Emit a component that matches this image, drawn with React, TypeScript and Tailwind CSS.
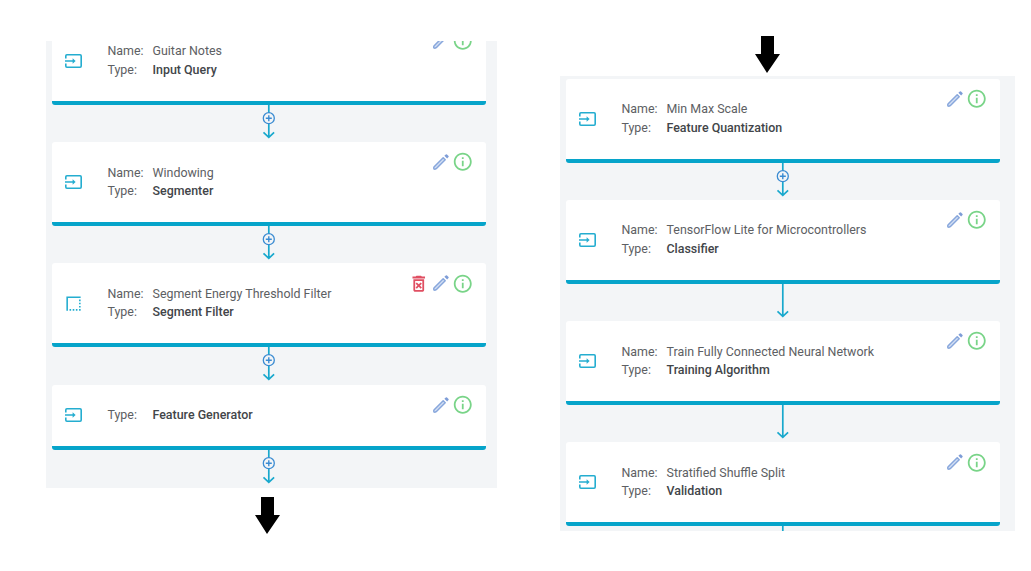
import { MdBorderStyle, MdInfoOutline, MdOutlineDeleteForever } from "react-icons/md";

type Step = {
  name?: string;
  type: string;
  icon?: "input" | "filter";
  deletable?: boolean;
  link: "add" | "plain";
};

const leftSteps: Step[] = [
  { name: "Guitar Notes", type: "Input Query", link: "add" },
  { name: "Windowing", type: "Segmenter", link: "add" },
  { name: "Segment Energy Threshold Filter", type: "Segment Filter", icon: "filter", deletable: true, link: "add" },
  { type: "Feature Generator", link: "add" },
];

const rightSteps: Step[] = [
  { name: "Min Max Scale", type: "Feature Quantization", link: "add" },
  { name: "TensorFlow Lite for Microcontrollers", type: "Classifier", link: "plain" },
  { name: "Train Fully Connected Neural Network", type: "Training Algorithm", link: "plain" },
  { name: "Stratified Shuffle Split", type: "Validation", link: "plain" },
];

function InputIcon() {
  return (
    <svg className="h-[14px] w-[17px] shrink-0" viewBox="0 0 17 14" fill="none">
      <path
        d="M0.8 4.6V1.9Q0.8 0.8 1.9 0.8H15.1Q16.2 0.8 16.2 1.9V12.1Q16.2 13.2 15.1 13.2H1.9Q0.8 13.2 0.8 12.1V9.4"
        stroke="currentColor"
        strokeWidth="1.6"
      />
      <path d="M0 7H9" stroke="currentColor" strokeWidth="1.5" />
      <path d="M7.6 4.3L10.6 7L7.6 9.7Z" fill="currentColor" />
    </svg>
  );
}

function Pencil() {
  return (
    <svg className="size-[18px] shrink-0" viewBox="0 0 18 18" fill="none">
      <path
        d="M1.9 15.9Q1.4 15 2.2 13.7L11.2 4.7L13.2 6.7L4.2 15.7Q2.8 16.5 1.9 15.9Z"
        fill="#d3dff3"
        stroke="#88a7dc"
        strokeWidth="1.5"
        strokeLinejoin="round"
      />
      <path d="M12.4 2.8L13.8 1.4Q14.4 0.9 15 1.4L16.5 2.9Q17 3.5 16.5 4.1L15.1 5.5Z" fill="#7d9cd7" />
    </svg>
  );
}

function Connector({ add }: { add: boolean }) {
  return (
    <svg className="block h-[37.3px] w-[16px] shrink-0" viewBox="0 0 16 37.3" fill="none">
      <path d="M7.8 0V32.5M2.5 27.4L7.8 32.3L13.1 27.4" stroke="#18a8cd" strokeWidth="1.7" />
      {add && (
        <>
          <circle cx="7.8" cy="13.2" r="5.5" fill="#f3f5f7" stroke="#3a8bd2" strokeWidth="1.3" />
          <path d="M7.8 10.2V16.2M4.8 13.2H10.8" stroke="#3a8bd2" strokeWidth="1.4" />
        </>
      )}
    </svg>
  );
}

function StepCard({ step }: { step: Step }) {
  return (
    <div
      className={`flex w-[434px] shrink-0 rounded-[3px] border-b-4 border-[#06a4ca] bg-white pl-[13px] pr-[13px] ${
        step.name ? "h-[84px]" : "h-[65.6px]"
      }`}
    >
      <div className="flex w-[42.5px] shrink-0 items-center text-[#24add0]">
        {step.icon === "filter" ? <MdBorderStyle className="-ml-[1px] size-[19px]" /> : <InputIcon />}
      </div>
      <div className="flex grow flex-col justify-center text-[12.43px] leading-[18.5px] text-[#5d6063]">
        {step.name && (
          <div className="flex">
            <span className="w-[45px] shrink-0">Name:</span>
            <span className="whitespace-nowrap">{step.name}</span>
          </div>
        )}
        <div className="flex">
          <span className="w-[45px] shrink-0">Type:</span>
          <span className="font-medium whitespace-nowrap text-[#424549]">{step.type}</span>
        </div>
      </div>
      <div className="flex h-[40px] shrink-0 items-center">
        {step.deletable && <MdOutlineDeleteForever className="mr-[2px] size-[21.5px] text-[#e04f62]" />}
        <Pencil />
        <MdInfoOutline className="ml-[2px] size-[21.5px] text-[#79d488]" />
      </div>
    </div>
  );
}

function Steps({ steps }: { steps: Step[] }) {
  return (
    <>
      {steps.map((step) => (
        <div key={step.type} className="flex w-[434px] shrink-0 flex-col items-center">
          <StepCard step={step} />
          <Connector add={step.link === "add"} />
        </div>
      ))}
    </>
  );
}

function FlowArrow() {
  return (
    <svg className="block h-[37px] w-[25px] shrink-0" viewBox="0 0 25 37">
      <path d="M6 0H19V18H25L12 37L0 18H6Z" fill="#000" />
    </svg>
  );
}

export default function App() {
  return (
    <main className="flex h-[571px] w-[1031px] overflow-hidden bg-white pl-[46px] font-[Roboto,sans-serif]">
      <section className="flex w-[451px] flex-col pt-[41px]">
        <div className="flex h-[447px] shrink-0 flex-col overflow-hidden bg-[#f3f5f7] pl-[6px]">
          <div className="-mt-[20.3px] flex flex-col">
            <Steps steps={leftSteps} />
          </div>
        </div>
        <div className="mt-[9px] pl-[209px]">
          <FlowArrow />
        </div>
      </section>
      <section className="ml-[63px] flex w-[455px] flex-col pt-[36px]">
        <div className="mb-[3px] pl-[195px]">
          <FlowArrow />
        </div>
        <div className="flex h-[455px] shrink-0 flex-col overflow-hidden bg-[#f3f5f7] pt-[2.5px] pl-[6px]">
          <Steps steps={rightSteps} />
        </div>
      </section>
    </main>
  );
}
